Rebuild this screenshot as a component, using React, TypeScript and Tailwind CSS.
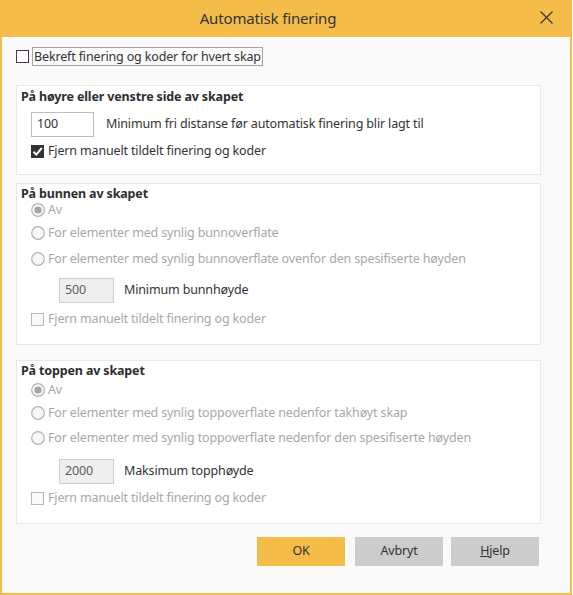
import React from 'react';

const font = { fontFamily: '"Noto Sans", "Liberation Sans", sans-serif' };

// text size used everywhere in the dialog body
const txt = 'text-[12.5px] tracking-[-0.15px]';

function Radio({ checked }: { checked?: boolean }) {
  return (
    <svg width="14" height="14" viewBox="0 0 14 14" className="shrink-0">
      <circle cx="7" cy="7" r="6.3" fill="#f7f7f7" stroke="#b3b3b3" strokeWidth="1.2" />
      {checked && <circle cx="7" cy="7" r="3.6" fill="#a6a6a6" />}
    </svg>
  );
}

function RadioRow({ label, checked, mt }: { label: string; checked?: boolean; mt: string }) {
  return (
    <div className={`flex items-center h-[14px] gap-[3px] leading-[14px] text-[#a8a8a8] ${txt} ${mt}`}>
      <Radio checked={checked} />
      <span>{label}</span>
    </div>
  );
}

type Gaps = { title: string; r1: string; r2: string; r3: string; input: string; check: string };

function Section({ title, first, second, height, value, valueLabel, gaps }: {
  title: string; first: string; second: string; height: string; value: string; valueLabel: string; gaps: Gaps;
}) {
  return (
    <div className={`bg-white border border-[#e8e8e8] pl-[4px] ${height}`}>
      <div className={`h-[16px] leading-[16px] text-[12.5px] tracking-[-0.15px] font-bold text-[#2e2e2e] ${gaps.title}`}>{title}</div>
      <div className="pl-[10px] flex flex-col">
        <RadioRow label="Av" checked mt={gaps.r1} />
        <RadioRow label={first} mt={gaps.r2} />
        <RadioRow label={second} mt={gaps.r3} />
        <div className={`flex items-center pl-[28px] gap-[10px] ${gaps.input}`}>
          <div className={`w-[55px] h-[25px] border border-[#cfcfcf] bg-[#efefef] flex items-center pl-[5px] text-[#606060] ${txt}`}>{value}</div>
          <span className={`text-[#333] ${txt}`}>{valueLabel}</span>
        </div>
        <div className={`flex items-center h-[14px] leading-[14px] gap-[4px] text-[#a8a8a8] ${txt} ${gaps.check}`}>
          <span className="block w-[13px] h-[13px] shrink-0 border border-[#b8b8b8] bg-[#fafafa]" />
          <span>Fjern manuelt tildelt finering og koder</span>
        </div>
      </div>
    </div>
  );
}

export default function App() {
  return (
    <div className="w-[573px] h-[595px] bg-white" style={font}>
      <div className="w-[572px] h-[595px] border-x-2 border-b-2 border-[#f4bc48] bg-[#fafafa] flex flex-col">
        <div className="h-[37px] shrink-0 bg-[#f4bc48] relative flex items-center justify-center pr-[36px]">
          <span className="text-[15px] tracking-[-0.15px] text-[#333]">Automatisk finering</span>
          <svg className="absolute right-[17px] top-[11px]" width="13" height="13" viewBox="0 0 13 13">
            <path d="M0.5 0.5 L12.5 12.5 M12.5 0.5 L0.5 12.5" stroke="#333" strokeWidth="1.1" />
          </svg>
        </div>
        <div className="pl-[14px] pr-[29px] flex flex-col">
          <div className="flex items-center h-[19px] mt-[10px]">
            <span className="block w-[13px] h-[13px] border border-[#4f3452] bg-white shrink-0" />
            <span className={`ml-[3px] border border-[#a5a5a5] h-[19px] px-[1px] leading-[17px] text-[#333] ${txt}`}>Bekreft finering og koder for hvert skap</span>
          </div>

          <div className="mt-[19px] h-[90px] bg-white border border-[#e8e8e8] pl-[4px]">
            <div className="h-[16px] leading-[16px] mt-[3px] text-[12.5px] tracking-[-0.15px] font-bold text-[#2e2e2e]">På høyre eller venstre side av skapet</div>
            <div className="pl-[10px]">
              <div className="flex items-center mt-[7px] gap-[12px]">
                <div className={`w-[63px] h-[25px] border border-[#bdbdbd] bg-white flex items-center pl-[5px] text-[#333] ${txt}`}>100</div>
                <span className={`text-[#333] ${txt}`}>Minimum fri distanse før automatisk finering blir lagt til</span>
              </div>
              <div className={`flex items-center h-[14px] leading-[14px] gap-[4px] mt-[7px] text-[#333] ${txt}`}>
                <span className="w-[13px] h-[13px] bg-[#333] flex items-center justify-center shrink-0">
                  <svg width="11" height="11" viewBox="0 0 11 11">
                    <path d="M1.5 5.8 L4.3 8.6 L9.8 2" fill="none" stroke="white" strokeWidth="2" />
                  </svg>
                </span>
                <span>Fjern manuelt tildelt finering og koder</span>
              </div>
            </div>
          </div>

          <div className="mt-[8px]">
            <Section
              title="På bunnen av skapet"
              first="For elementer med synlig bunnoverflate"
              second="For elementer med synlig bunnoverflate ovenfor den spesifiserte høyden"
              height="h-[162px]"
              value="500"
              valueLabel="Minimum bunnhøyde"
              gaps={{ title: 'mt-[2px]', r1: 'mt-[1px]', r2: 'mt-[9px]', r3: 'mt-[12px]', input: 'mt-[12px]', check: 'mt-[9px]' }}
            />
          </div>

          <div className="mt-[15px]">
            <Section
              title="På toppen av skapet"
              first="For elementer med synlig toppoverflate nedenfor takhøyt skap"
              second="For elementer med synlig toppoverflate nedenfor den spesifiserte høyden"
              height="h-[164px]"
              value="2000"
              valueLabel="Maksimum topphøyde"
              gaps={{ title: 'mt-[2px]', r1: 'mt-[4px]', r2: 'mt-[9px]', r3: 'mt-[11px]', input: 'mt-[14px]', check: 'mt-[7px]' }}
            />
          </div>

          <div className="flex justify-end mt-[13px] pr-[2px]">
            <button className={`w-[88px] h-[29px] bg-[#f4bc48] text-[#333] ${txt}`}>OK</button>
            <button className={`ml-[10px] w-[88px] h-[29px] bg-[#cccccc] text-[#333] ${txt}`}>Avbryt</button>
            <button className={`ml-[8px] w-[88px] h-[29px] bg-[#cccccc] text-[#333] ${txt}`}><span className="underline">H</span>jelp</button>
          </div>
        </div>
      </div>
    </div>
  );
}
